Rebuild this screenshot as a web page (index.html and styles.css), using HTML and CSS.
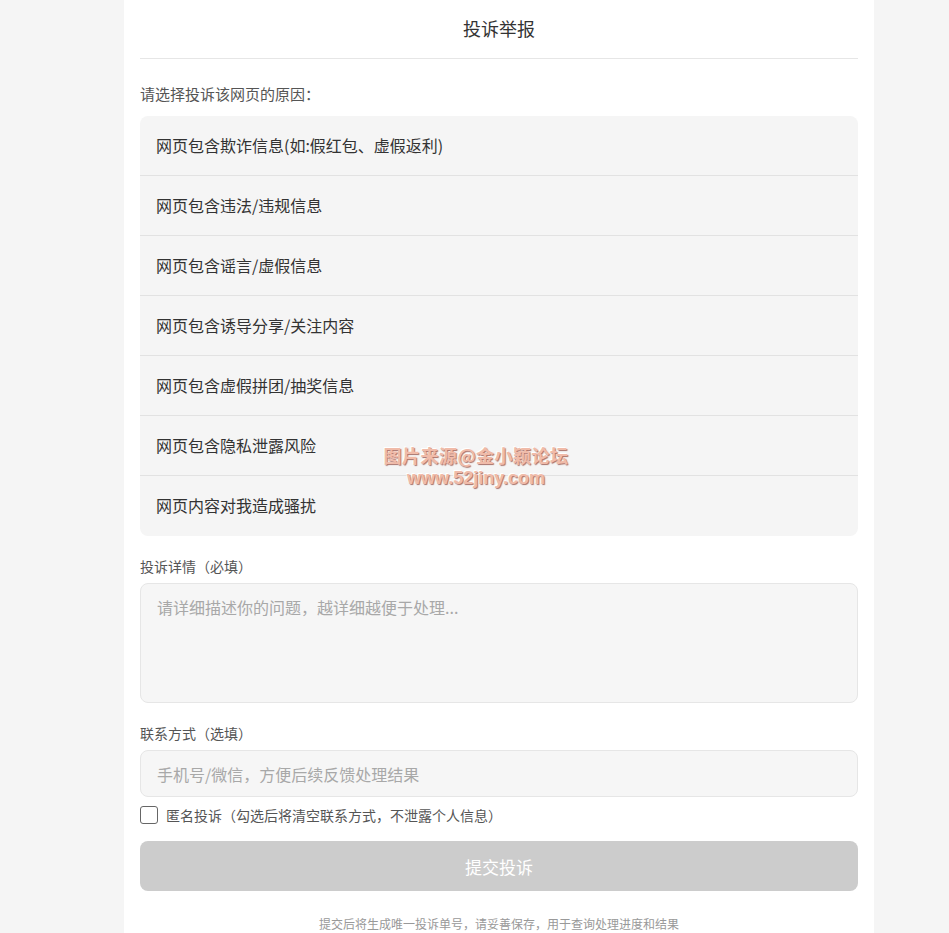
FILE: index.html
```html
<!DOCTYPE html>
<html lang="zh-CN">
<head>
<meta charset="utf-8">
<title>投诉举报</title>
<link rel="stylesheet" href="styles.css">
</head>
<body>
<div class="page">
  <div class="sheet">
    <header class="head">投诉举报</header>
    <div class="label label-first">请选择投诉该网页的原因：</div>
    <ul class="reasons">
      <li>网页包含欺诈信息(如:假红包、虚假返利)</li>
      <li>网页包含违法/违规信息</li>
      <li>网页包含谣言/虚假信息</li>
      <li>网页包含诱导分享/关注内容</li>
      <li>网页包含虚假拼团/抽奖信息</li>
      <li>网页包含隐私泄露风险</li>
      <li>网页内容对我造成骚扰</li>
    </ul>
    <div class="label">投诉详情（必填）</div>
    <textarea class="detail" placeholder="请详细描述你的问题，越详细越便于处理..."></textarea>
    <div class="label">联系方式（选填）</div>
    <input class="contact" type="text" placeholder="手机号/微信，方便后续反馈处理结果">
    <label class="anon"><input type="checkbox" class="check"><span>匿名投诉（勾选后将清空联系方式，不泄露个人信息）</span></label>
    <button class="submit" type="button">提交投诉</button>
    <p class="note">提交后将生成唯一投诉单号，请妥善保存，用于查询处理进度和结果</p>
  </div>
  <div class="watermark">
    <div class="wm1">图片来源@金小颖论坛</div>
    <div class="wm2">www.52jiny.com</div>
  </div>
</div>
</body>
</html>
```
FILE: styles.css
```css
html, body {
  margin: 0;
  padding: 0;
  background: #f5f5f5;
}
body {
  font-family: "Noto Sans CJK SC", "Noto Sans", sans-serif;
  color: #333;
}
.page {
  position: relative;
  padding-left: 124px;
}
.sheet {
  width: 750px;
  box-sizing: border-box;
  background: #fff;
  padding: 0 16px 20px;
  min-height: 960px;
}
.head {
  height: 58px;
  line-height: 56px;
  text-align: center;
  font-size: 18px;
  color: #333;
  border-bottom: 1px solid #e6e6e6;
}
.label {
  font-size: 14px;
  line-height: 20px;
  color: #555;
  margin: 20px 0 7px;
}
.label-first {
  font-size: 15px;
  margin: 25px 0 12px;
}
.reasons {
  list-style: none;
  margin: 0;
  padding: 0;
  background: #f5f5f5;
  border-radius: 8px;
}
.reasons li {
  box-sizing: border-box;
  height: 60px;
  line-height: 58px;
  padding: 0 16px;
  font-size: 16px;
  color: #333;
  border-bottom: 1px solid #e2e2e2;
}
.reasons li:last-child {
  border-bottom: none;
}
.detail, .contact {
  display: block;
  width: 100%;
  box-sizing: border-box;
  background: #f6f6f6;
  border: 1px solid #e6e6e6;
  border-radius: 8px;
  font-family: inherit;
  font-size: 16px;
  color: #333;
  outline: none;
  margin: 0;
}
.detail {
  height: 120px;
  padding: 12px 16px;
  line-height: 22px;
  resize: none;
}
.contact {
  height: 47px;
  padding: 0 16px;
}
.detail::placeholder, .contact::placeholder {
  color: #a8a8a8;
}
.anon {
  display: flex;
  align-items: center;
  gap: 8px;
  margin-top: 8px;
  font-size: 14px;
  color: #555;
  line-height: 20px;
}
.check {
  appearance: none;
  -webkit-appearance: none;
  width: 18px;
  height: 18px;
  margin: 0;
  border: 1.5px solid #666;
  border-radius: 3px;
  box-sizing: border-box;
  background: #fff;
}
.submit {
  display: block;
  width: 100%;
  height: 50px;
  margin-top: 16px;
  border: none;
  border-radius: 8px;
  background: #cccccc;
  color: #fff;
  font-family: inherit;
  font-size: 17px;
}
.note {
  margin: 24px 0 0;
  text-align: center;
  font-size: 12px;
  line-height: 18px;
  color: #999;
}
.watermark {
  position: absolute;
  left: 383px;
  top: 443px;
  width: 186px;
  text-align: center;
  font-weight: bold;
  color: #f0bba9;
  text-shadow: 1px 1px 1px #a8726a, -1px -1px 0 #fff;
  pointer-events: none;
}
.wm1 {
  font-size: 18px;
  line-height: 24px;
  letter-spacing: 0.5px;
}
.wm2 {
  font-family: "Liberation Sans", Arial, sans-serif;
  font-size: 18px;
  line-height: 22px;
}
```
